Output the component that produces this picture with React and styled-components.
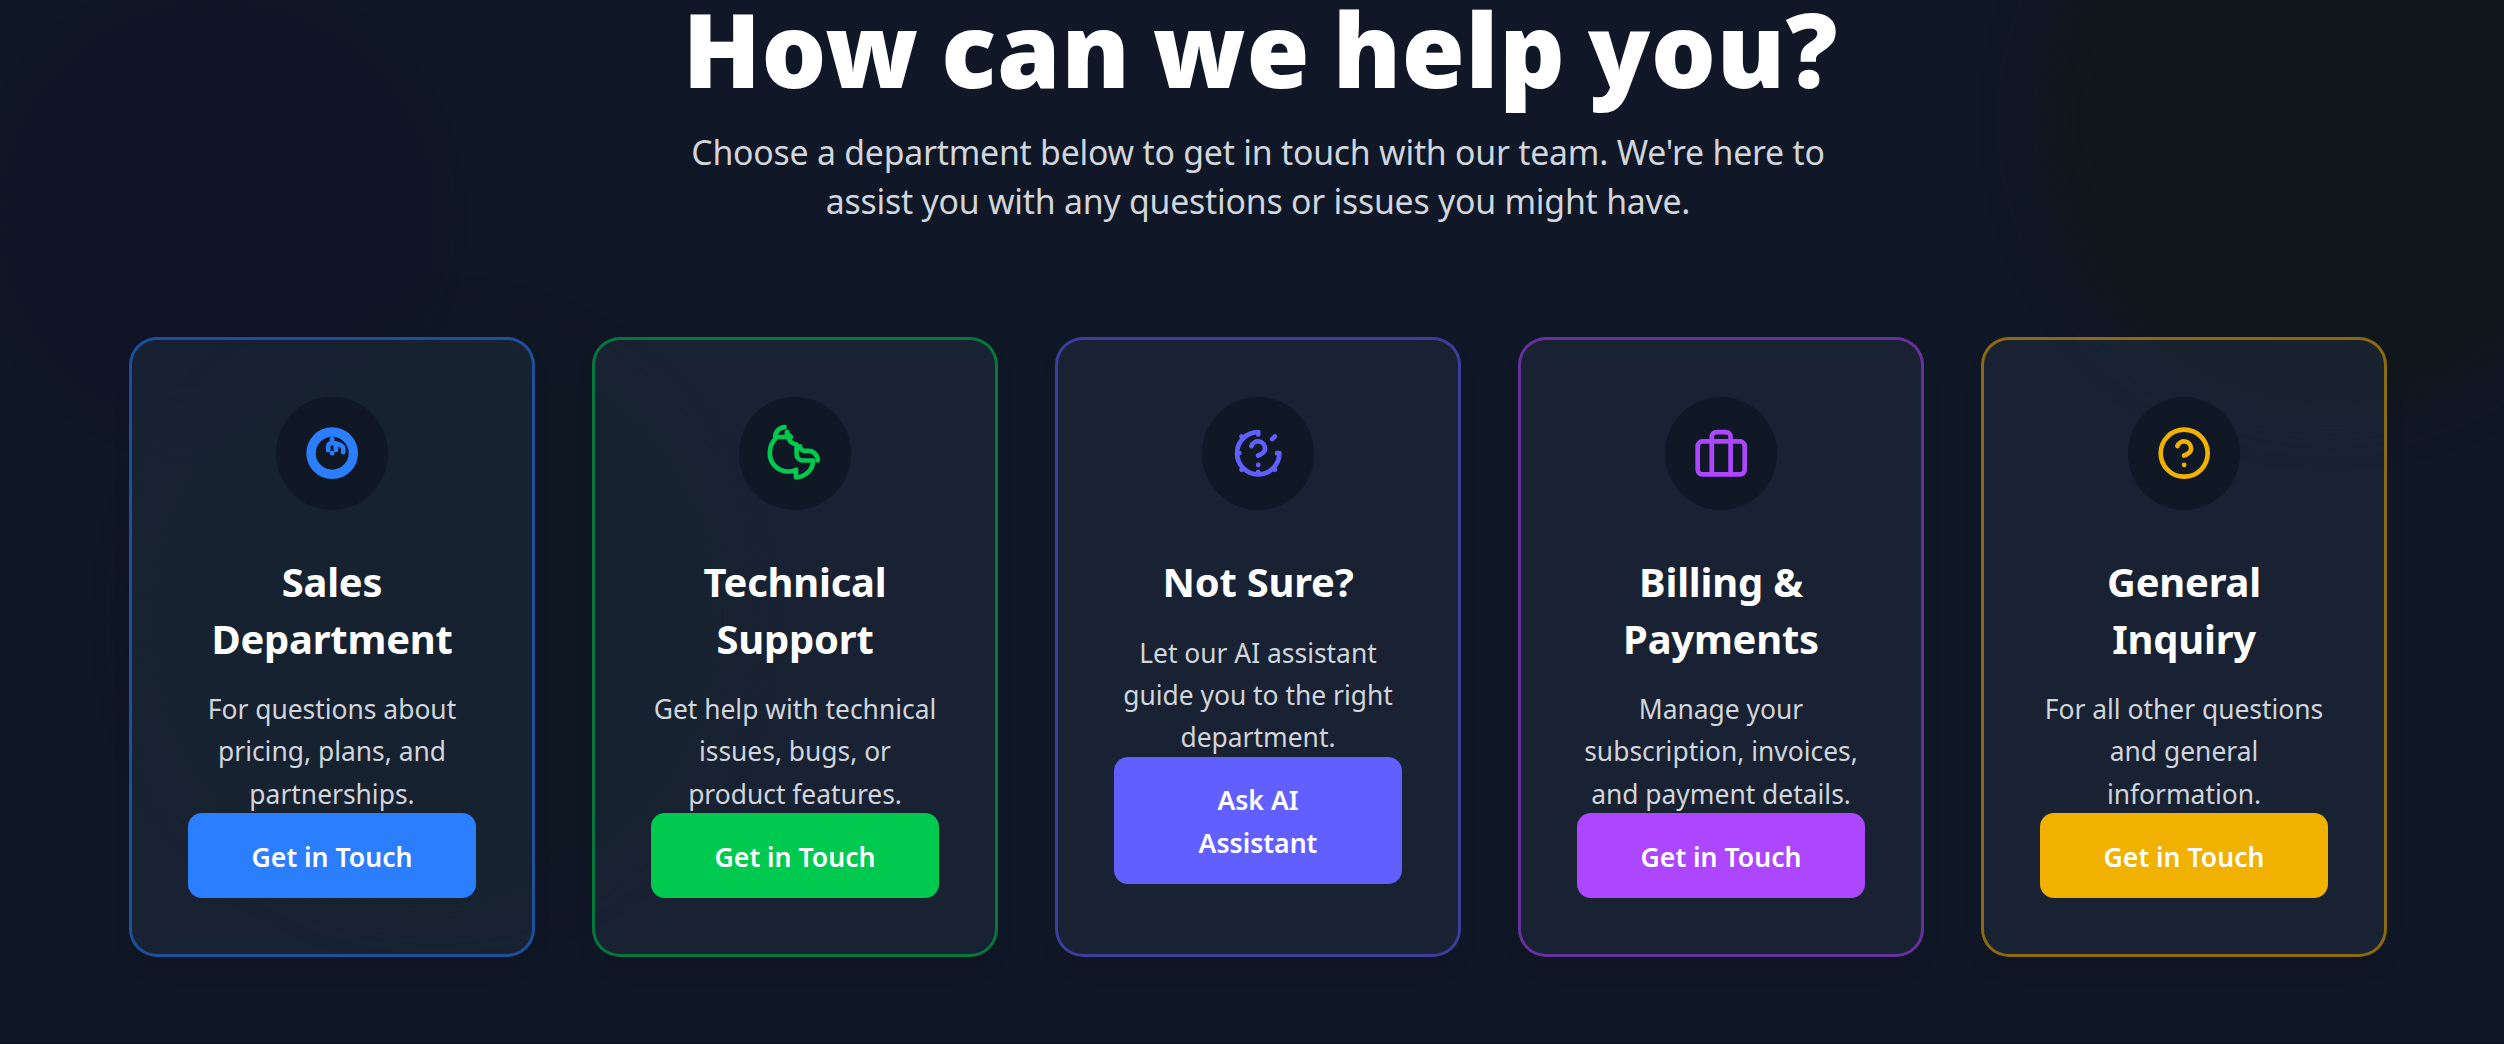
import React from 'react';
import styled, { createGlobalStyle } from 'styled-components';

const Global = createGlobalStyle`
  html { font-size: 22.56px; }
  body { margin: 0; background: #101726; overflow: hidden; }
  * { box-sizing: border-box; }
`;

const Page = styled.main`
  position: relative;
  height: 1044px;
  overflow: hidden;
  padding: 0 117px 0 129px;
  border-bottom: 1px solid #0b0e18;
  background: #101726;
  font-family: 'Noto Sans', 'Open Sans', sans-serif;
  text-align: center;
`;

const Glow = styled.div`
  position: absolute;
  left: ${(p) => p.$x}px;
  top: ${(p) => p.$y}px;
  width: ${(p) => p.$d}px;
  height: ${(p) => p.$d}px;
  border-radius: 50%;
  background: ${(p) => p.$color};
  filter: blur(${(p) => p.$blur}px);
`;

const Header = styled.header`
  position: relative;
  display: flex;
  flex-direction: column;
  align-items: center;
  height: 337px;
`;

const Heading = styled.h1`
  margin: 0;
  padding-left: 5px;
  color: #fff;
  font-size: 102px;
  font-weight: 900;
  line-height: 98px;
  letter-spacing: 0.8px;
  word-spacing: -5px;
  white-space: nowrap;
`;

const Lead = styled.p`
  margin: 30px 0 0;
  width: 1185px;
  color: #d1d5dc;
  font-size: 33.8px;
  letter-spacing: -0.22px;
  line-height: 49.2px;
`;

const Grid = styled.section`
  position: relative;
  display: grid;
  grid-template-columns: repeat(5, 406px);
  justify-content: space-between;
`;

const Card = styled.article`
  display: flex;
  flex-direction: column;
  align-items: center;
  height: 620px;
  padding: 56.8px 56px 56px;
  border: 3px solid ${(p) => p.$color}8c;
  border-radius: 28px;
  background: rgba(30, 41, 59, 0.6);
  background-clip: padding-box;
  box-shadow: 0 14px 21px -4px rgba(0, 0, 0, 0.1);
`;

const IconDisc = styled.div`
  display: flex;
  flex: none;
  align-items: center;
  justify-content: center;
  width: 5rem;
  height: 5rem;
  margin-bottom: 44.6px;
  border-radius: 50%;
  background: #101725;
  color: ${(p) => p.$color};

  svg {
    width: 2.5rem;
    height: 2.5rem;
    overflow: visible;
    fill: none;
    stroke: currentColor;
    stroke-width: 2;
    stroke-linecap: round;
    stroke-linejoin: round;
  }
`;

const Title = styled.h2`
  margin: 0 0 21px;
  color: #fff;
  font-size: 39.9px;
  font-weight: 700;
  letter-spacing: -0.2px;
  line-height: 56.4px;
  white-space: nowrap;
`;

const Text = styled.p`
  margin: 0 0 -1.6px;
  width: 100%;
  color: #d1d5dc;
  font-size: 26.4px;
  line-height: 42.3px;
  white-space: nowrap;
`;

const Button = styled.button`
  flex: none;
  width: 100%;
  padding: 22.4px 40px 19.8px;
  border: 0;
  border-radius: 14px;
  background: ${(p) => p.$color};
  color: #fff;
  font-family: inherit;
  font-size: 26.6px;
  font-weight: 600;
  line-height: 42.3px;
`;

const Sales = () => (
  <svg viewBox="0 0 24 24">
    <circle cx="12" cy="12" r="9" strokeWidth="4" />
    <path d="M12 6v1.600M10.300 10.700V9.300c0-1 .7-1.700 1.700-1.700s1.600.7 1.600 1.700v1.300M12.800 7.700c1.600.2 3.900 1.100 3.900 2.300v1.600M12 12h.01" />
  </svg>
);

const Support = () => (
  <svg viewBox="0 0 24 24">
    <path d="M7.500.9A4.300 4.300 0 0 0 3.500 5.100H9.200c0 1.500 1.100 2.700 3.400 3.200v4.100c0 1.500 1.200 2.700 2.700 2.700h4.400a7.400 7.400 0 0 1-7.400 7.100l.1-3.200c-1 .6-2.500.8-3.800.8A7.700 7.700 0 0 1 1.200 12c0-2.600 1-4.900 2.600-6.400" />
    <path d="M8.500 2.900v1.500M8.700 3.700l1.500 1.400" />
    <path d="M14.100 9.100c0 1.100.8 1.900 1.900 1.900h1.600c2.200 0 4 1.800 4 4.100" />
  </svg>
);

const Unsure = () => (
  <svg viewBox="0 0 24 24">
    <path d="M12 3v1M12 20v1M21 12h-1M4 12H3M19.070 4.930l-1.100 1.100M5.640 18.360l-.7.700M5.640 5.640l-.7-.7M18.360 18.360l.7.700M12 3a9 9 0 1 0 9 9" />
    <path d="M9.090 9a3 3 0 0 1 5.830 1c0 2-3 3-3 3M12 17h.01" />
  </svg>
);

const Billing = () => (
  <svg viewBox="0 0 24 24">
    <rect x="2" y="7" width="20" height="14" rx="2" />
    <path d="M16 21V5a2 2 0 0 0-2-2h-4a2 2 0 0 0-2 2v16" />
  </svg>
);

const General = () => (
  <svg viewBox="0 0 24 24">
    <circle cx="12" cy="12" r="10" />
    <path d="M9.090 9a3 3 0 0 1 5.830 1c0 2-3 3-3 3M12 17h.01" />
  </svg>
);

const cards = [
  { icon: Sales, color: '#2b7fff', title: ['Sales', 'Department'], text: ['For questions about', 'pricing, plans, and', 'partnerships.'], action: ['Get in Touch'] },
  { icon: Support, color: '#00c950', title: ['Technical', 'Support'], text: ['Get help with technical', 'issues, bugs, or', 'product features.'], action: ['Get in Touch'] },
  { icon: Unsure, color: '#615fff', title: ['Not Sure?'], text: ['Let our AI assistant', 'guide you to the right', 'department.'], action: ['Ask AI', 'Assistant'] },
  { icon: Billing, color: '#ad46ff', title: ['Billing &', 'Payments'], text: ['Manage your', 'subscription, invoices,', 'and payment details.'], action: ['Get in Touch'] },
  { icon: General, color: '#f0b100', title: ['General', 'Inquiry'], text: ['For all other questions', 'and general', 'information.'], action: ['Get in Touch'] },
];

const lines = (list) =>
  list.map((line, i) => (
    <React.Fragment key={line}>
      {i > 0 && <br />}
      {line}
    </React.Fragment>
  ));

export default function App() {
  return (
    <Page>
      <Global />
      <Glow $x={5} $y={5} $d={425} $blur={16} $color="rgba(15, 20, 39, 0.7)" />
      <Glow $x={140} $y={325} $d={590} $blur={22} $color="rgba(14, 24, 33, 0.75)" />
      <Glow $x={2040} $y={-170} $d={580} $blur={26} $color="rgba(16, 23, 28, 0.9)" />
      <Header>
        <Heading>How can we help you?</Heading>
        <Lead>{lines(["Choose a department below to get in touch with our team. We're here to", 'assist you with any questions or issues you might have.'])}</Lead>
      </Header>
      <Grid>
        {cards.map(({ icon: Icon, color, title, text, action }) => (
          <Card key={color} $color={color}>
            <IconDisc $color={color}><Icon /></IconDisc>
            <Title>{lines(title)}</Title>
            <Text>{lines(text)}</Text>
            <Button $color={color}>{lines(action)}</Button>
          </Card>
        ))}
      </Grid>
    </Page>
  );
}
